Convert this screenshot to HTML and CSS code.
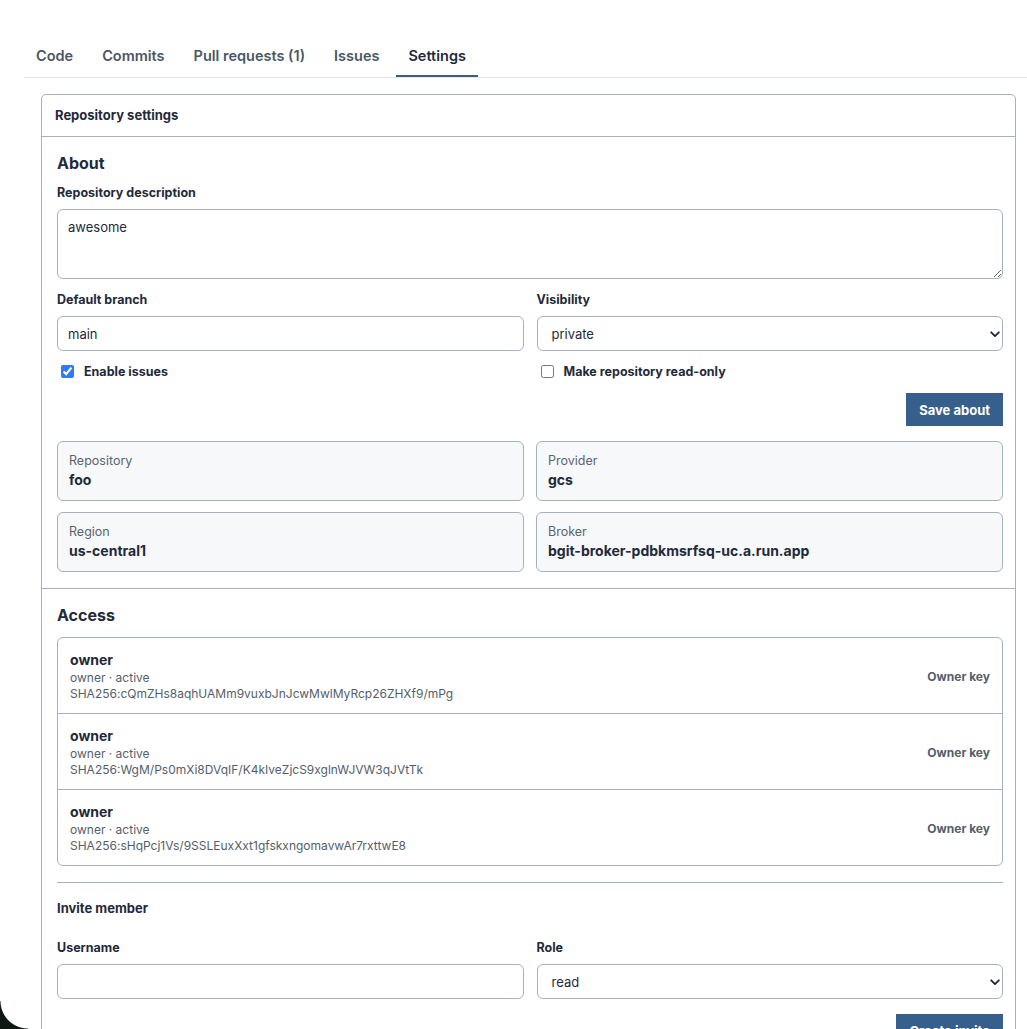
FILE: index.html
```html
<html>
<head>
    <meta charset="utf-8">
    <link rel="stylesheet" href="styles.css">
</head>
<body>
<div class="page">
    <nav class="tabs">
        <a class="tab">Code</a>
        <a class="tab">Commits</a>
        <a class="tab">Pull requests (1)</a>
        <a class="tab">Issues</a>
        <a class="tab active">Settings</a>
    </nav>

    <div class="panel">
        <div class="panel_head">Repository settings</div>

        <section class="section">
            <h3>About</h3>
            <label class="field_label">Repository description</label>
            <textarea class="textarea">awesome</textarea>

            <div class="two_col">
                <div class="field">
                    <label class="field_label">Default branch</label>
                    <input class="input" type="text" value="main">
                </div>
                <div class="field">
                    <label class="field_label">Visibility</label>
                    <div class="select_wrap">
                        <select class="select"><option>private</option><option>public</option></select>
                        <svg class="chevron" width="10" height="7" viewBox="0 0 10 7"><path d="M1.2 1.3 L5 5.1 L8.8 1.3" fill="none" stroke="#1f2633" stroke-width="1.8" stroke-linecap="round" stroke-linejoin="round"/></svg>
                    </div>
                </div>
                <label class="check"><input type="checkbox" checked> Enable issues</label>
                <label class="check"><input type="checkbox"> Make repository read-only</label>
            </div>

            <div class="actions first"><button class="btn">Save about</button></div>

            <div class="facts">
                <div class="fact"><div class="fact_label">Repository</div><div class="fact_value">foo</div></div>
                <div class="fact"><div class="fact_label">Provider</div><div class="fact_value">gcs</div></div>
                <div class="fact"><div class="fact_label">Region</div><div class="fact_value">us-central1</div></div>
                <div class="fact"><div class="fact_label">Broker</div><div class="fact_value">bgit-broker-pdbkmsrfsq-uc.a.run.app</div></div>
            </div>
        </section>

        <section class="section">
            <h3>Access</h3>
            <ul class="members">
                <li class="member">
                    <div>
                        <div class="member_name">owner</div>
                        <div class="member_meta">owner · active</div>
                        <div class="member_meta">SHA256:cQmZHs8aqhUAMm9vuxbJnJcwMwlMyRcp26ZHXf9/mPg</div>
                    </div>
                    <span class="member_key">Owner key</span>
                </li>
                <li class="member">
                    <div>
                        <div class="member_name">owner</div>
                        <div class="member_meta">owner · active</div>
                        <div class="member_meta">SHA256:WgM/Ps0mXi8DVqIF/K4kIveZjcS9xglnWJVW3qJVtTk</div>
                    </div>
                    <span class="member_key">Owner key</span>
                </li>
                <li class="member">
                    <div>
                        <div class="member_name">owner</div>
                        <div class="member_meta">owner · active</div>
                        <div class="member_meta">SHA256:sHqPcj1Vs/9SSLEuxXxt1gfskxngomavwAr7rxttwE8</div>
                    </div>
                    <span class="member_key">Owner key</span>
                </li>
            </ul>

            <hr class="divider">

            <h4>Invite member</h4>
            <div class="two_col">
                <div class="field">
                    <label class="field_label">Username</label>
                    <input class="input" type="text">
                </div>
                <div class="field">
                    <label class="field_label">Role</label>
                    <div class="select_wrap">
                        <select class="select"><option>read</option><option>write</option><option>admin</option></select>
                        <svg class="chevron" width="10" height="7" viewBox="0 0 10 7"><path d="M1.2 1.3 L5 5.1 L8.8 1.3" fill="none" stroke="#1f2633" stroke-width="1.8" stroke-linecap="round" stroke-linejoin="round"/></svg>
                    </div>
                </div>
            </div>
            <div class="actions"><button class="btn">Create invite</button></div>
        </section>
    </div>
</div>
<div class="corner"></div>
</body>
</html>
```

FILE: styles.css
```css
body {
    margin:0;
    background:#fff;
    font-family:Inter, "Noto Sans", sans-serif;
    color:#1f2a3a;
    overflow:hidden;
}

.page {
    padding-left:24px;
}

.tabs {
    display:flex;
    gap:5px;
    padding-top:36px;
    border-bottom:1px solid #e2e6eb;
}

.tab {
    padding:10px 12px 9px;
    font-size:14.5px;
    line-height:20px;
    font-weight:600;
    color:#4b5666;
    border-bottom:2px solid transparent;
}

.tab.active {
    color:#1f2a3a;
    border-bottom-color:#36608b;
}

.panel {
    margin:16px 11px 0 17px;
    border:1px solid #a3b2c2;
    border-radius:5px;
}

.panel_head {
    padding:12px 13px;
    font-size:13px;
    line-height:17px;
    font-weight:700;
    border-bottom:1px solid #a3b2c2;
}

.section {
    padding:16px 12px 16px 15px;
}

.section + .section {
    border-top:1px solid #a3b2c2;
}

h3 {
    margin:0 0 12px;
    font-size:16px;
    line-height:20px;
    font-weight:700;
}

h4 {
    margin:17px 0 24px;
    font-size:13px;
    line-height:16px;
    font-weight:700;
}

.field_label {
    display:block;
    margin-bottom:8px;
    font-size:12.5px;
    line-height:16px;
    font-weight:700;
}

.textarea, .input, .select {
    display:block;
    width:100%;
    box-sizing:border-box;
    border:1px solid #a3b2c2;
    border-radius:6px;
    background:#fff;
    font-family:inherit;
    font-size:13px;
    color:#1f2a3a;
    outline:0;
}

.textarea {
    height:70px;
    padding:9px 10px;
    margin:0 0 13px;
    resize:vertical;
}

.input {
    height:35px;
    padding:0 10px;
}

.select {
    height:35px;
    padding:0 12px 0 14px;
    appearance:none;
    -webkit-appearance:none;
}

.select_wrap {
    position:relative;
}

.chevron {
    position:absolute;
    right:3px;
    top:15px;
}

.two_col {
    display:grid;
    grid-template-columns:1fr 1fr;
    column-gap:13px;
}

.check {
    display:flex;
    align-items:center;
    gap:7px;
    margin-top:11px;
    font-size:12.5px;
    line-height:16px;
    font-weight:700;
}

.check input {
    width:13px;
    height:13px;
    accent-color:#2f7bf6;
}

.actions {
    display:flex;
    justify-content:flex-end;
    margin-top:15px;
}

.actions.first {
    margin-top:12px;
}

.btn {
    height:33px;
    padding:0 13px;
    border:0;
    border-radius:0;
    background:#36608b;
    color:#fff;
    font-family:inherit;
    font-size:13px;
    font-weight:700;
}

.facts {
    display:grid;
    grid-template-columns:1fr 1fr;
    gap:11px 12px;
    margin-top:15px;
}

.fact {
    height:60px;
    box-sizing:border-box;
    padding:10px 11px;
    background:#f7f8fa;
    border:1px solid #a3b2c2;
    border-radius:6px;
}

.fact_label {
    font-size:12.5px;
    line-height:17px;
    color:#5a6472;
}

.fact_value {
    margin-top:2px;
    font-size:14px;
    line-height:18px;
    font-weight:700;
}

.members {
    list-style:none;
    margin:0;
    padding:0;
    border:1px solid #a3b2c2;
    border-radius:6px;
}

.member {
    display:flex;
    justify-content:space-between;
    align-items:center;
    padding:12px 12px 11px;
}

.member + .member {
    border-top:1px solid #a3b2c2;
}

.member_name {
    font-size:14px;
    line-height:20px;
    font-weight:700;
}

.member_meta {
    font-size:12px;
    line-height:16px;
    color:#545e6b;
}

.member_key {
    font-size:12px;
    font-weight:700;
    color:#545e6b;
}

.divider {
    margin:16px 0 0;
    border:0;
    border-top:1px solid #a3b2c2;
}

.corner {
    position:fixed;
    left:0;
    bottom:0;
    width:28px;
    height:28px;
    background:radial-gradient(circle at 100% 0, transparent 27px, #0e1813 28px);
}
```
